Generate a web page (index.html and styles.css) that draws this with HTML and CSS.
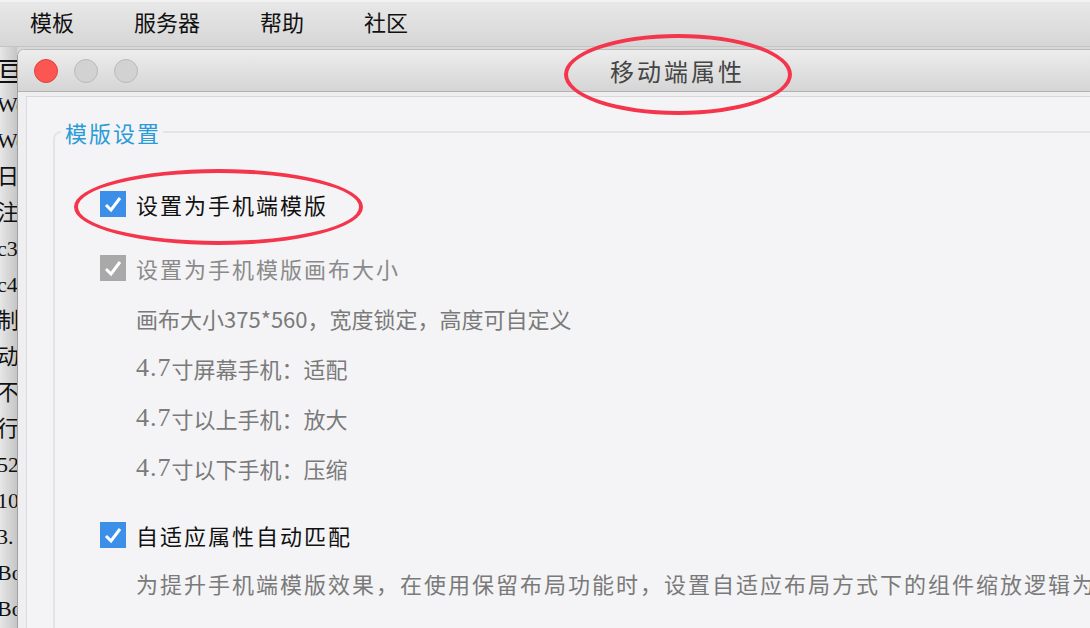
FILE: index.html
```html
<!DOCTYPE html>
<html lang="zh">
<head>
    <meta charset="UTF-8">
    <title>移动端属性</title>
    <link rel="stylesheet" href="styles.css">
</head>
<body>
    <div class="menubar">
        <span class="menu-item">模板</span>
        <span class="menu-item">服务器</span>
        <span class="menu-item">帮助</span>
        <span class="menu-item">社区</span>
    </div>

    <div class="desk">
        <div class="side">
            <div class="side-icon">亘</div>
            <div class="side-lines">
                <div>Wo</div>
                <div>Wo</div>
                <div>日</div>
                <div>注</div>
                <div>c3</div>
                <div>c4</div>
                <div>制</div>
                <div>动</div>
                <div>不</div>
                <div>行</div>
                <div>52</div>
                <div>10</div>
                <div>3.</div>
                <div>Bo</div>
                <div>Bo</div>
            </div>
        </div>

        <div class="window">
            <div class="titlebar">
                <span class="light light-close"></span>
                <span class="light"></span>
                <span class="light"></span>
                <span class="title">移动端属性</span>
            </div>
            <div class="window-body">
                <div class="panel">
                    <fieldset class="group">
                        <legend>模版设置</legend>
                        <div class="options">
                            <div class="option">
                                <span class="check">
                                    <svg width="26" height="26" viewBox="0 0 26 26"><path d="M6 14l5 5 9-12" fill="none" stroke="#fff" stroke-width="3"/></svg>
                                </span>
                                <span class="label">设置为手机端模版</span>
                            </div>
                            <div class="option option-muted">
                                <span class="check check-off">
                                    <svg width="26" height="26" viewBox="0 0 26 26"><path d="M6 14l5 5 9-12" fill="none" stroke="#fff" stroke-width="3"/></svg>
                                </span>
                                <span class="label">设置为手机模版画布大小</span>
                            </div>
                            <div class="note">画布大小375*560，宽度锁定，高度可自定义</div>
                            <div class="note"><span class="num">4.7</span>寸屏幕手机：适配</div>
                            <div class="note"><span class="num">4.7</span>寸以上手机：放大</div>
                            <div class="note"><span class="num">4.7</span>寸以下手机：压缩</div>
                            <div class="option option-gap">
                                <span class="check">
                                    <svg width="26" height="26" viewBox="0 0 26 26"><path d="M6 14l5 5 9-12" fill="none" stroke="#fff" stroke-width="3"/></svg>
                                </span>
                                <span class="label">自适应属性自动匹配</span>
                            </div>
                            <div class="note note-last">为提升手机端模版效果，在使用保留布局功能时，设置自适应布局方式下的组件缩放逻辑为</div>
                        </div>
                    </fieldset>
                </div>
            </div>
        </div>
    </div>

    <div class="mark mark-title"></div>
    <div class="mark mark-option"></div>
</body>
</html>
```

FILE: styles.css
```css
:root {
    --blue: #3b8fe9;
    --mark: #f4364c;
    --panel: #f4f4f6;
    --muted: #7a7a7a;
}

body {
    margin: 0;
    width: 1090px;
    height: 628px;
    overflow: hidden;
    position: relative;
    background: #d8d8d8;
    font-family: "Noto Sans CJK SC", "Noto Sans", sans-serif;
    color: #111;
}

/* 顶部菜单 */
.menubar {
    height: 47px;
    display: flex;
    align-items: center;
    gap: 60px;
    padding: 0 0 6px 30px;
    background: linear-gradient(#e8e8e8, #d6d6d6);
    border-top: 2px solid #f2f2f2;
    border-bottom: 1px solid #c4c4c4;
    box-sizing: border-box;
    font-size: 22px;
}

.desk {
    display: flex;
    height: 581px;
}

/* 窗口后面的编辑器 */
.side {
    flex: none;
    width: 17px;
    overflow: hidden;
    background: linear-gradient(to right, #e6e6e6, #c6c6c6);
    padding-top: 6px;
    box-sizing: border-box;
}

.side-icon {
    margin-left: -4px;
    height: 34px;
    font-family: "Noto Sans CJK SC", sans-serif;
    font-size: 28px;
    line-height: 34px;
}

.side-lines {
    margin-left: -3px;
    font-family: "Liberation Serif", "Noto Sans CJK SC", serif;
    font-size: 22px;
    line-height: 36px;
    white-space: nowrap;
}

.window {
    flex: none;
    width: 1200px;
    margin-top: 2px;
    background: var(--panel);
    border-left: 1px solid #a0a0a0;
    border-top: 1px solid #bcbcbc;
    border-top-left-radius: 7px;
    overflow: hidden;
}

.titlebar {
    height: 41px;
    display: flex;
    align-items: center;
    gap: 16px;
    padding-left: 16px;
    background: linear-gradient(#ededed, #d5d5d5);
    border-bottom: 1px solid #b2b2b2;
}

.light {
    width: 24px;
    height: 24px;
    border-radius: 50%;
    background: #d2d2d2;
    border: 1px solid #bababa;
    box-sizing: border-box;
}

.light-close {
    background: #fc5652;
    border-color: #e0413d;
}

.title {
    margin-left: 456px;
    font-size: 24px;
    letter-spacing: 3px;
    color: #454545;
}

.window-body {
    padding: 4px 0 0 8px;
    background: #efeff1;
}

.panel {
    height: 540px;
    background: var(--panel);
    border-top: 1px solid #d8d8da;
    border-left: 1px solid #dcdcde;
}

.group {
    margin: 21px 0 0 26px;
    padding: 33px 0 0 6px;
    border: 2px solid #e4e4e6;
    border-radius: 8px;
    min-height: 600px;
}

.group legend {
    padding: 0 2px 0 4px;
    font-size: 22px;
    line-height: 28px;
    letter-spacing: 2px;
    color: #2b9bd8;
}

.options {
    padding-left: 39px;
}

.option {
    display: flex;
    align-items: center;
    gap: 10px;
    height: 50px;
}

.option + .option {
    margin-top: 14px;
}

.option-gap {
    margin-top: 17px;
}

.check {
    width: 26px;
    height: 26px;
    background: var(--blue);
    flex: none;
}

.check svg {
    display: block;
}

.check-off {
    background: #a9a9a9;
}

.label {
    font-size: 22px;
    letter-spacing: 2px;
}

.option-muted .label {
    color: #8a8a8a;
}

.note {
    height: 50px;
    display: flex;
    align-items: center;
    padding-left: 36px;
    font-size: 22px;
    color: var(--muted);
    white-space: nowrap;
}

.note-last {
    height: 46px;
    letter-spacing: 2px;
}

.num {
    font-family: "Liberation Serif", serif;
    font-size: 26px;
    letter-spacing: 1px;
}

/* 红色标注圈 */
.mark {
    position: absolute;
    border: 4px solid var(--mark);
    border-radius: 50%;
    box-sizing: border-box;
}

.mark-title {
    left: 564px;
    top: 34px;
    width: 228px;
    height: 81px;
}

.mark-option {
    left: 74px;
    top: 169px;
    width: 289px;
    height: 76px;
}
```
